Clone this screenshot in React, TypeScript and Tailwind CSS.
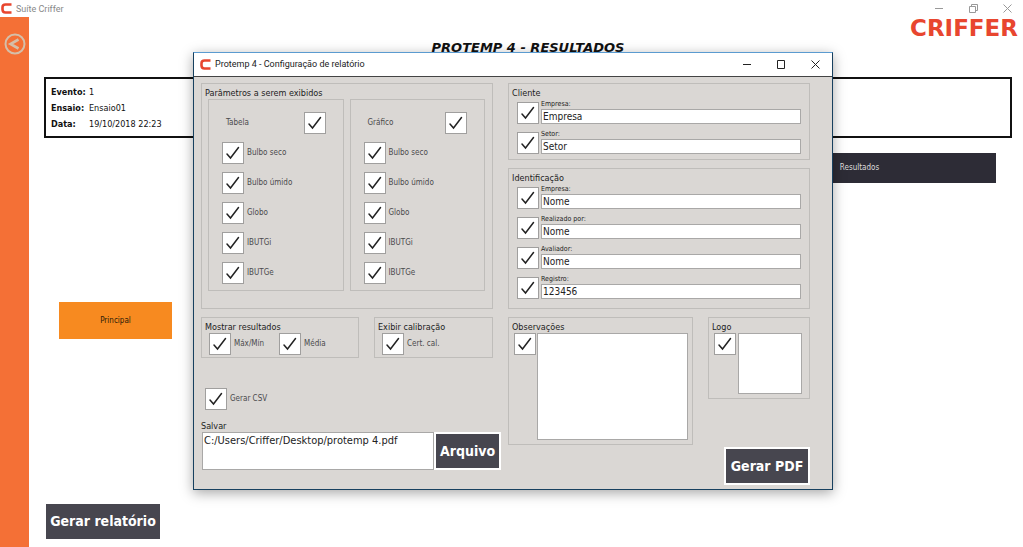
import { useId, useState } from "react";
import type { ReactNode } from "react";

const GRANDEZAS = ["Bulbo seco", "Bulbo úmido", "Globo", "IBUTGi", "IBUTGe"];

const UI_FONT = "font-['DejaVu_Sans_Condensed','DejaVu_Sans',sans-serif]";

function MarcaCriffer() {
  return (
    <svg className="h-[11px] w-[11px] shrink-0" viewBox="0 0 11 11" fill="none" aria-hidden="true">
      <path d="M10.5 1.5H4.5Q1.5 1.5 1.5 4.5V6.5Q1.5 9.5 4.5 9.5H10.5" stroke="#e8462f" strokeWidth="2.6" />
    </svg>
  );
}

function BotoesJanela({ restaurar = false, className }: { restaurar?: boolean; className: string }) {
  return (
    <div className={`flex items-center gap-[25px] ${className}`}>
      <button type="button" aria-label="Minimizar">
        <svg className="h-[9px] w-[9px]" viewBox="0 0 9 9" stroke="currentColor" fill="none">
          <path d="M0 4.5H8" />
        </svg>
      </button>
      <button type="button" aria-label={restaurar ? "Restaurar" : "Maximizar"}>
        <svg className="h-[9px] w-[9px]" viewBox="0 0 9 9" stroke="currentColor" fill="none">
          {restaurar ? <path d="M.5 2.5H6.5V8.5H.5ZM2.5 2.5V.5H8.5V6.5H6.5" /> : <path d="M.5 .5H7.5V8.5H.5Z" />}
        </svg>
      </button>
      <button type="button" aria-label="Fechar">
        <svg className="h-[9px] w-[9px]" viewBox="0 0 9 9" stroke="currentColor" fill="none">
          <path d="M.5 .5L8.5 8.5M8.5 .5L.5 8.5" />
        </svg>
      </button>
    </div>
  );
}

function Caixa({ id, rotulo }: { id?: string; rotulo?: string }) {
  const [marcado, setMarcado] = useState(true);

  return (
    <span className="relative block h-[22px] w-[22px] shrink-0">
      <input
        id={id}
        type="checkbox"
        aria-label={rotulo}
        checked={marcado}
        onChange={(e) => setMarcado(e.target.checked)}
        className="block h-full w-full appearance-none border border-[#a09f9e] bg-white"
      />
      {marcado && (
        <svg
          className="pointer-events-none absolute inset-0"
          viewBox="0 0 22 22"
          fill="none"
          stroke="#222"
          strokeWidth="1.5"
          strokeLinecap="round"
        >
          <path d="M5 12L8.5 16L16.5 5.5" />
        </svg>
      )}
    </span>
  );
}

function Opcao({ texto }: { texto: string }) {
  const id = useId();
  return (
    <div className="flex items-center gap-[3px]">
      <Caixa id={id} />
      <label htmlFor={id} className="text-[8px] whitespace-nowrap text-[#4a4a4c]">
        {texto}
      </label>
    </div>
  );
}

function Grupo({ titulo, className = "", children }: { titulo: string; className?: string; children: ReactNode }) {
  return (
    <section className={`border border-[#bfbdba] pt-[3px] ${className}`}>
      <h2 className="pl-[3px] text-[9px] leading-3 text-[#222]">{titulo}</h2>
      {children}
    </section>
  );
}

function ColunaParametros({ titulo }: { titulo: string }) {
  const id = useId();
  return (
    <div className="flex-1 border border-[#bfbdba] pt-3 pb-[6px] pl-[13px]">
      <div className="mb-2 flex items-center justify-between pr-[17px] pl-1">
        <label htmlFor={id} className="text-[8px] text-[#4a4a4c]">
          {titulo}
        </label>
        <Caixa id={id} />
      </div>
      <div className="flex flex-col gap-2">
        {GRANDEZAS.map((g) => (
          <Opcao key={g} texto={g} />
        ))}
      </div>
    </div>
  );
}

function Campo({ rotulo, inicial }: { rotulo: string; inicial: string }) {
  const id = useId();
  const [valor, setValor] = useState(inicial);
  return (
    <div className="flex gap-[2px]">
      <div className="pt-[3px]">
        <Caixa rotulo={`Exibir ${rotulo}`} />
      </div>
      <div className="min-w-0 flex-1">
        <label htmlFor={id} className="block text-[7px] leading-[10px] text-[#222]">
          {rotulo}
        </label>
        <input
          id={id}
          value={valor}
          onChange={(e) => setValor(e.target.value)}
          className="block h-[15px] w-full border border-[#a9a8a7] bg-white pl-px text-[10px] leading-[13px] text-[#222]"
        />
      </div>
    </div>
  );
}

function DialogoRelatorio() {
  const [arquivo, setArquivo] = useState("C:/Users/Criffer/Desktop/protemp 4.pdf");

  return (
    <div
      role="dialog"
      aria-label="Protemp 4 - Configuração de relatório"
      className="absolute top-[52px] right-[190px] left-[193px] border border-t-[#5b9bd0] border-r-[#17405f] border-b-[#17405f] border-l-[#17405f] bg-[#dad7d4] shadow-[0_3px_12px_rgba(0,0,0,0.35)]"
    >
      <div className="flex h-6 items-center border-b border-[#444] bg-white pr-3 pl-[6px]">
        <MarcaCriffer />
        <span className="ml-1 font-['Roboto',sans-serif] text-[9px] text-[#222]">
          Protemp 4 - Configuração de relatório
        </span>
        <BotoesJanela className="ml-auto text-[#222]" />
      </div>

      <div className="grid grid-cols-[300fr_302fr] gap-[7px] pt-[6px] pr-[22px] pb-1 pl-[7px]">
        <div className="flex flex-col">
          <Grupo titulo="Parâmetros a serem exibidos" className="mr-2 pb-[17px]">
            <div className="flex gap-[6px] pr-[7px] pl-[6px]">
              <ColunaParametros titulo="Tabela" />
              <ColunaParametros titulo="Gráfico" />
            </div>
          </Grupo>

          <div className="mt-2 mr-2 flex justify-between">
            <Grupo titulo="Mostrar resultados" className="w-[158px] pb-[2px]">
              <div className="grid grid-cols-[70px_1fr] pl-[7px]">
                <Opcao texto="Máx/Mín" />
                <Opcao texto="Média" />
              </div>
            </Grupo>
            <Grupo titulo="Exibir calibração" className="w-[119px] pb-[2px]">
              <div className="pl-[7px]">
                <Opcao texto="Cert. cal." />
              </div>
            </Grupo>
          </div>

          <div className="mt-[30px] pl-1">
            <Opcao texto="Gerar CSV" />
          </div>

          <label htmlFor="salvar" className="mt-[10px] text-[9px] leading-3 text-[#222]">
            Salvar
          </label>
          <div className="flex pl-px">
            <textarea
              id="salvar"
              value={arquivo}
              onChange={(e) => setArquivo(e.target.value)}
              className="h-[38px] min-w-0 flex-1 resize-none border border-[#a9a8a7] bg-white pt-px pl-px text-[11px] leading-[13px] text-[#222]"
            />
            <button
              type="button"
              className="h-[38px] w-[67px] border-2 border-white bg-[#47464f] text-[14px] font-bold text-white"
            >
              Arquivo
            </button>
          </div>
        </div>

        <div className="flex flex-col gap-2">
          <Grupo titulo="Cliente" className="pr-2 pb-[5px]">
            <div className="flex flex-col gap-[5px] pl-2">
              <Campo rotulo="Empresa:" inicial="Empresa" />
              <Campo rotulo="Setor:" inicial="Setor" />
            </div>
          </Grupo>

          <Grupo titulo="Identificação" className="pr-2 pb-[9px]">
            <div className="flex flex-col gap-[5px] pl-2">
              <Campo rotulo="Empresa:" inicial="Nome" />
              <Campo rotulo="Realizado por:" inicial="Nome" />
              <Campo rotulo="Avaliador:" inicial="Nome" />
              <Campo rotulo="Registro:" inicial="123456" />
            </div>
          </Grupo>

          <div className="flex items-start justify-between gap-[15px]">
            <Grupo titulo="Observações" className="flex-1 pr-1 pb-1">
              <div className="flex gap-px pl-[5px]">
                <Caixa rotulo="Exibir observações" />
                <textarea
                  aria-label="Observações"
                  className="h-[107px] min-w-0 flex-1 resize-none border border-[#a9a8a7] bg-white text-[10px]"
                />
              </div>
            </Grupo>
            <Grupo titulo="Logo" className="w-[102px] pr-[7px] pb-1">
              <div className="flex gap-[2px] pl-[5px]">
                <Caixa rotulo="Exibir logo" />
                <div className="h-[61px] flex-1 border border-[#a9a8a7] bg-white" />
              </div>
            </Grupo>
          </div>

          <button
            type="button"
            className="-mt-[6px] h-[38px] w-[86px] self-end border-2 border-white bg-[#47464f] text-[14px] font-bold text-white"
          >
            Gerar PDF
          </button>
        </div>
      </div>
    </div>
  );
}

export default function App() {
  return (
    <div className={`relative flex min-h-screen flex-col bg-white ${UI_FONT}`}>
      <header className="flex h-[17px] items-center pr-[11px] pl-px">
        <MarcaCriffer />
        <span className="ml-1 font-['Roboto',sans-serif] text-[9px] leading-4 text-[#888]">Suíte Criffer</span>
        <BotoesJanela restaurar className="ml-auto text-[#999]" />
      </header>

      <div className="flex flex-1">
        <nav className="w-[29px] shrink-0 bg-[#f47036] pt-4 pl-1">
          <button type="button" aria-label="Voltar" className="block">
            <svg className="h-[22px] w-[22px]" viewBox="0 0 22 22" fill="none" stroke="#d5bfa9">
              <circle cx="11" cy="11" r="9.5" strokeWidth="2" />
              <path d="M14.5 6.5L6.5 11L14.5 15.5" strokeWidth="2.6" />
            </svg>
          </button>
        </nav>

        <main className="flex flex-1 flex-col pr-[11px] pb-2 pl-[15px]">
          <div className="-mr-[6px] flex h-[22px] justify-end text-[23px] leading-[22px] font-bold text-[#e8462f]">
            <span className="font-['DejaVu_Sans',sans-serif]">CRIFFER</span>
          </div>
          <h1 className="text-center font-['DejaVu_Sans',sans-serif] text-[13px] leading-[18px] font-bold text-[#111] italic">
            PROTEMP 4 - RESULTADOS
          </h1>

          <dl className="mt-5 grid h-[61px] grid-cols-[38px_1fr] content-center border-2 border-[#111] pl-[5px] text-[9px] leading-4 text-[#111]">
            <dt className="font-bold">Evento:</dt>
            <dd>1</dd>
            <dt className="font-bold">Ensaio:</dt>
            <dd>Ensaio01</dd>
            <dt className="font-bold">Data:</dt>
            <dd>19/10/2018 22:23</dd>
          </dl>

          <button
            type="button"
            className="mt-[15px] mr-4 h-[30px] w-[273px] self-end bg-[#2d2c36] text-[8px] text-[#ddd]"
          >
            Resultados
          </button>
          <button
            type="button"
            className="mt-[119px] ml-[15px] h-[37px] w-[113px] bg-[#f78a20] text-[8px] text-[#2a1a08]"
          >
            Principal
          </button>
          <button
            type="button"
            className="mt-auto ml-[2px] h-[35px] w-[114px] bg-[#47464f] text-[14px] font-bold whitespace-nowrap text-white"
          >
            Gerar relatório
          </button>
        </main>
      </div>

      <DialogoRelatorio />
    </div>
  );
}
